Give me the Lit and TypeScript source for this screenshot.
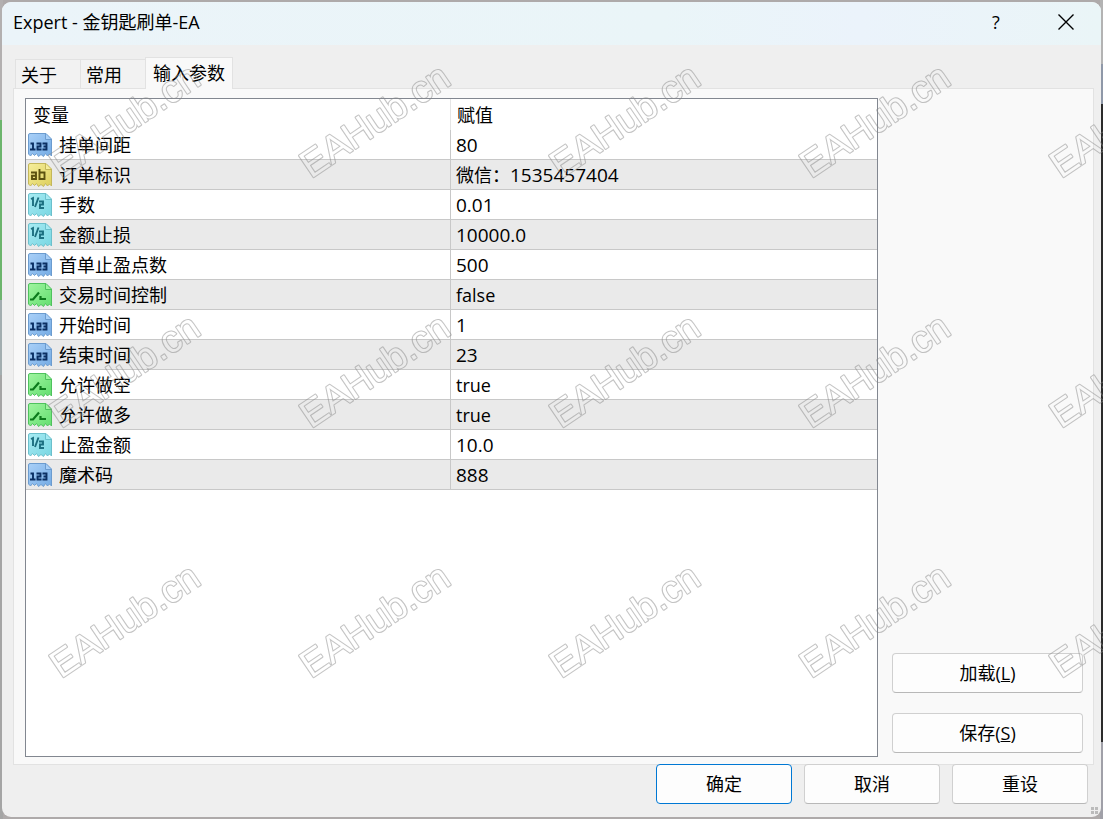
import { LitElement, html, svg, css } from "lit";
import { customElement, property, state } from "lit/decorators.js";
import { classMap } from "lit/directives/class-map.js";

type Kind = "int" | "string" | "double" | "bool";
interface Param { kind: Kind; name: string; prefix?: string; value: string; }

const PARAMS: Param[] = [
  { kind: "int", name: "挂单间距", value: "80" },
  { kind: "string", name: "订单标识", prefix: "微信：", value: "1535457404" },
  { kind: "double", name: "手数", value: "0.01" },
  { kind: "double", name: "金额止损", value: "10000.0" },
  { kind: "int", name: "首单止盈点数", value: "500" },
  { kind: "bool", name: "交易时间控制", value: "false" },
  { kind: "int", name: "开始时间", value: "1" },
  { kind: "int", name: "结束时间", value: "23" },
  { kind: "bool", name: "允许做空", value: "true" },
  { kind: "bool", name: "允许做多", value: "true" },
  { kind: "double", name: "止盈金额", value: "10.0" },
  { kind: "int", name: "魔术码", value: "888" },
];

const PALETTE: Record<Kind, [string, string, string, string]> = {
  int: ["#a9d0f8", "#74abe4", "#6c9ccf", "#0b2f63"],
  string: ["#f6ee9c", "#ddcf5c", "#c4b75a", "#5c5210"],
  double: ["#a8ebf3", "#78d6e2", "#6cc0cc", "#1c6f80"],
  bool: ["#a0f5a0", "#62de6f", "#4fc25e", "#0c7a1c"],
};

@customElement("type-icon")
export class TypeIcon extends LitElement {
  static styles = css`
    :host { display: block; width: 26px; height: 26px; }
    svg { display: block; }
  `;
  @property() kind: Kind = "int";

  private glyph(ink: string) {
    const line = (d: string, w = 1.9) =>
      svg`<path d=${d} fill="none" stroke=${ink} stroke-width=${w} />`;
    switch (this.kind) {
      case "int":
        return line("M3.5 11.5H6V17.5M3 17.5H8.5M9.5 11.5H13.5V14.5H10.5V17.5H14.5M15.5 11.5H19.5V17.5H15.5M16.5 14.5H19.5");
      case "string":
        return line("M4 10.5H9V17H5V13.7H9M12.5 7V17H17.5V10.5H12.5");
      case "double":
        return line("M4 7L6 6V14M11.5 5.5L8 15M12 9.500H16V12.500H13V16H17", 1.9);
      default:
        return line("M3 17.5H6L12 10.5M13.5 14V17H19", 2.2);
    }
  }

  render() {
    const [light, base, edge, ink] = PALETTE[this.kind];
    return html`<svg width="26" height="26" viewBox="0 0 26 26" aria-hidden="true">
      <defs><linearGradient id="g" x1="0" y1="0" x2="1" y2="1">
        <stop offset="0" stop-color=${light} /><stop offset="1" stop-color=${base} />
      </linearGradient></defs>
      <path d="M1.5 3Q1.5 1.5 3 1.5H19L24.5 7V24L22.5 22L20.5 24L18.5 21.5L16.5 24.5L14 22.5L11.5 24.5L9.5 21.5L7.5 23.5L5.5 21.5L3.5 24L1.5 22Z"
        fill="url(#g)" stroke=${edge} stroke-linejoin="round" />
      <path d="M18.5 2V7.5H24" fill=${light} stroke=${edge} />
      ${this.glyph(ink)}
    </svg>`;
  }
}

@customElement("water-mark")
export class WaterMark extends LitElement {
  static styles = css`
    :host { position: absolute; inset: 0; pointer-events: none; }
    svg { display: block; width: 100%; height: 100%; }
    text { font: 38px "Liberation Sans", Arial, sans-serif; stroke-linejoin: round; }
    .outer { fill: white; stroke: white; stroke-width: 2; }
    .inner { fill: black; }
  `;
  render() {
    const word = (cls: string) =>
      svg`<text class=${cls} transform="translate(61 179) rotate(-34)">EAHub.cn</text>`;
    return html`<svg aria-hidden="true">
      <defs>
        <mask id="ring" maskUnits="userSpaceOnUse" x="0" y="0" width="250" height="250">
          ${word("outer")}${word("inner")}
        </mask>
        <pattern id="tile" width="250" height="250" patternUnits="userSpaceOnUse">
          <rect width="250" height="250" fill="#888" fill-opacity="0.5" mask="url(#ring)" />
        </pattern>
      </defs>
      <rect width="100%" height="100%" fill="url(#tile)" />
    </svg>`;
  }
}

@customElement("app-root")
export class AppRoot extends LitElement {
  static styles = css`
    :host {
      display: block;
      position: relative;
      box-sizing: border-box;
      height: 100vh;
      padding: 2px;
      overflow: hidden;
      font: 18px/24px "Open Sans", "Noto Sans CJK SC", sans-serif;
      color: #000;
      background: linear-gradient(#b3b0b0 0 120px, #6cb56c 120px 300px, #a3aeb0 300px 375px, #a5a5a5 375px 100%) left / 3px 100% no-repeat,
        linear-gradient(#b3b3b3 0 64px, #8f98a8 64px 104px, #2b2b2b 104px 742px, #a0a0a8 742px 100%) right / 3px 100% no-repeat,
        #aeaaaa;
    }
    * { box-sizing: border-box; }
    button { font: inherit; color: inherit; margin: 0; padding: 0; }
    .window {
      height: 100%;
      display: flex;
      flex-direction: column;
      background: #efefef;
      border-radius: 9px;
      overflow: hidden;
    }
    .titlebar {
      flex: none;
      display: flex;
      align-items: center;
      height: 43px;
      padding: 0 0 4px 11px;
      background: linear-gradient(90deg, #ebf4f9, #eaf5f8 60%, #ebf3fb 78%, #eaf5f7);
    }
    .title { flex: 1; margin: 0; font: inherit; }
    .sys { width: 70px; height: 38px; border: 0; background: none; display: grid; place-items: center; }
    .tabs { flex: none; display: flex; align-items: flex-end; height: 44px; padding: 0 13px; }
    .tab {
      height: 30px;
      width: 65px;
      padding-left: 5px;
      text-align: left;
      border: 1px solid #e2e2e2;
      border-width: 1px 0 0 1px;
      background: #f2f2f2;
    }
    .tab.active { position: relative; width: 88px; height: 32px; padding: 0 0 2px 7px; background: #f9f9f9; border-right-width: 1px; }
    .panel {
      flex: 1;
      min-height: 0;
      display: flex;
      gap: 14px;
      margin: -1px 7px -1px 11px;
      padding: 9px 10px 7px 11px;
      background: #f9f9f9;
      border: 1px solid #e2e2e2;
    }
    .list { flex: 1; background: #fff; border: 1px solid #828790; overflow: auto; }
    table { width: 100%; border-collapse: separate; border-spacing: 0; table-layout: fixed; }
    th, td { height: 30px; padding: 0 0 0 5px; text-align: left; font-weight: normal; border-bottom: 1px solid #c8c8c8; }
    th { height: 31px; border-bottom: 0; padding-left: 6px; }
    .first { width: 425px; border-right: 1px solid #c8c8c8; }
    th.first { border-right-color: #e5e5e5; padding-left: 7px; }
    td.first { padding-left: 1px; }
    tr.alt { background: #eaeaea; }
    .name { display: flex; align-items: center; gap: 6px; height: 29px; }
    .value { font-size: 19px; }
    .prefix, .word { font-size: 18px; }
    .side { width: 191px; display: flex; flex-direction: column; justify-content: flex-end; gap: 20px; padding-bottom: 4px; }
    .push { height: 40px; background: #fdfdfd; border: 1px solid #d0d0d0; border-bottom-color: #b8b8b8; border-radius: 4px; }
    .footer { flex: none; position: relative; display: flex; justify-content: flex-end; gap: 12px; height: 53px; padding-right: 13px; }
    .footer .push { width: 136px; }
    .footer .primary { border-color: #0078d4; }
    .grip { position: absolute; right: 4px; bottom: 4px; }
  `;

  @state() private tab = 2;

  render() {
    return html`
      <main class="window">
        <header class="titlebar">
          <h1 class="title">Expert - 金钥匙刷单-EA</h1>
          <button class="sys" aria-label="帮助">?</button>
          <button class="sys" aria-label="关闭">
            <svg width="16" height="16" viewBox="0 0 16 16"><path d="M.5.5l15 15M15.5.5l-15 15" stroke="#000" stroke-width="1.4" /></svg>
          </button>
        </header>
        <div class="tabs" role="tablist">
          ${["关于", "常用", "输入参数"].map((t, i) => html`
            <button role="tab" aria-selected=${this.tab === i}
              class=${classMap({ tab: true, active: this.tab === i })}
              @click=${() => (this.tab = i)}>${t}</button>`)}
        </div>
        <section class="panel">
          <div class="list">
            <table>
              <thead><tr><th class="first" scope="col">变量</th><th scope="col">赋值</th></tr></thead>
              <tbody>
                ${PARAMS.map((p, i) => html`
                  <tr class=${classMap({ alt: i % 2 === 1 })}>
                    <td class="first"><div class="name"><type-icon kind=${p.kind}></type-icon>${p.name}</div></td>
                    <td class=${classMap({ value: p.kind !== "bool", word: p.kind === "bool" })}>${p.prefix ? html`<span class="prefix">${p.prefix}</span>` : null}${p.value}</td>
                  </tr>`)}
              </tbody>
            </table>
          </div>
          <div class="side">
            <button class="push">加载(<u>L</u>)</button>
            <button class="push">保存(<u>S</u>)</button>
          </div>
        </section>
        <footer class="footer">
          <button class="push primary">确定</button>
          <button class="push">取消</button>
          <button class="push">重设</button>
        </footer>
      </main>
      <svg class="grip" width="8" height="8" viewBox="0 0 8 8" aria-hidden="true">
        <path d="M0 0h3v3H0zM4 0h3v3H4zM0 4h3v3H0zM4 4h3v3H4z" fill="#bbb" />
      </svg>
      <water-mark></water-mark>
    `;
  }
}
